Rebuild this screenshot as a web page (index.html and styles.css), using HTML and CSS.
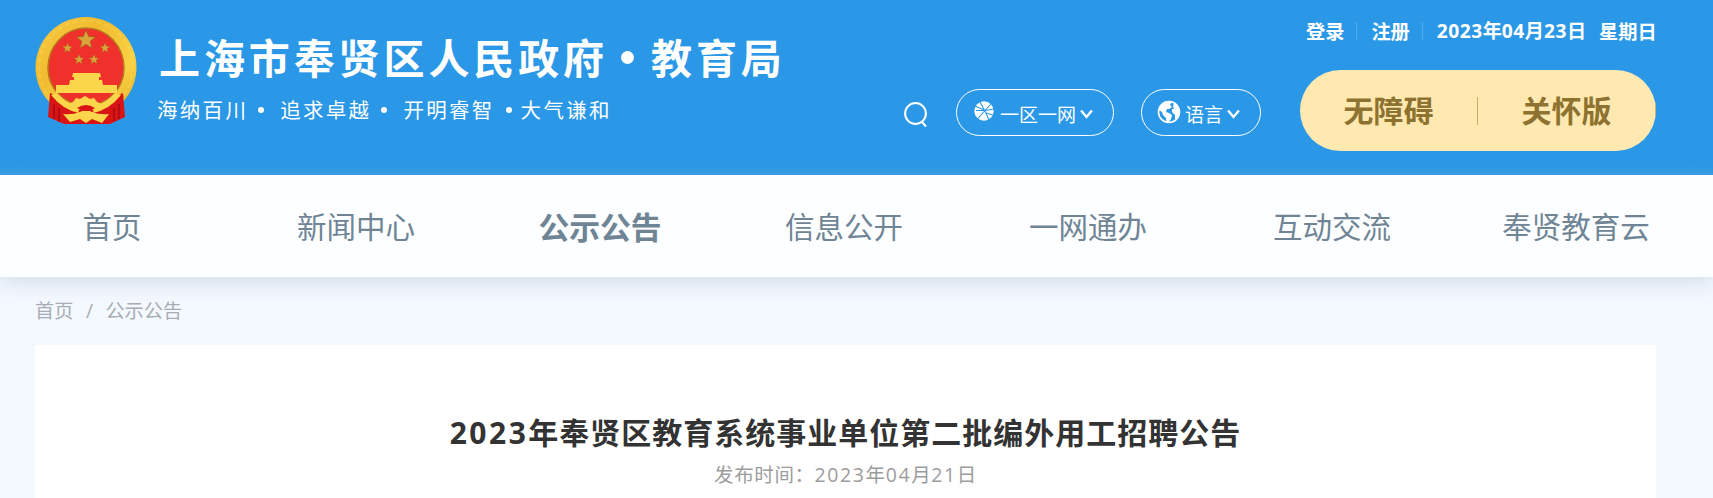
FILE: index.html
```html
<!DOCTYPE html>
<html lang="zh-CN">
<head>
    <meta charset="UTF-8">
    <title>2023年奉贤区教育系统事业单位第二批编外用工招聘公告</title>
    <link rel="stylesheet" href="styles.css">
</head>
<body>

<div class="header">
    <div class="container">
        <div class="brand">
            <svg class="emblem" viewBox="0 0 102 109">
                <defs>
                    <linearGradient id="gold" x1="0" y1="0" x2="1" y2="1">
                        <stop offset="0" stop-color="#f7cb43"/>
                        <stop offset=".35" stop-color="#f1bb30"/>
                        <stop offset=".7" stop-color="#fad244"/>
                        <stop offset="1" stop-color="#e3a325"/>
                    </linearGradient>
                    <path id="star" d="M0-10 2.600-3.400 9.500-3.100 4.100 1.300 5.900 8.100 0 4.200-5.900 8.100-4.100 1.300-9.500-3.100-2.600-3.400z"/>
                </defs>
                <circle cx="51" cy="51.500" r="50.500" fill="url(#gold)"/>
                <circle cx="51" cy="51.500" r="47" fill="none" stroke="#ffe070" stroke-width="2" stroke-dasharray="5 3" opacity=".3"/>
                <path d="M15 77 30 84 51 92 73 84 88 77 90 101 75 108H29L13 101z" fill="#d91414"/>
                <path d="M13 52a38 40 0 0 1 76 0 38 38 0 0 1-76 0z" fill="#f0302a" stroke="#b5781c" stroke-width="1.500"/>
                <g fill="#d9a53a" stroke="#8d5d18" stroke-width=".5">
                    <use href="#star" transform="translate(51 24)"/>
                    <use href="#star" transform="translate(32.500 32) scale(.52)"/>
                    <use href="#star" transform="translate(70 32) scale(.52)"/>
                    <use href="#star" transform="translate(44 43.500) scale(.52)"/>
                    <use href="#star" transform="translate(59 43.500) scale(.52)"/>
                </g>
                <g fill="#fbd64a">
                    <path d="M38 57h27l1 4h-29zM39 61h25v5h-25zM35 64h32l1 5h-34zM21 69h61v8h-61z"/>
                    <path d="M16 79q12 15 28 18l-1-7q-12-3-21-13z"/>
                    <path d="M86 79q-12 15-28 18l1-7q12-3 21-13z"/>
                    <path d="M33 88l5-2 3-4 4 1 5-3 5 3 4-1 3 4 5 2-8 6h-18z"/>
                    <path d="M28 98q9 1 17-2l6-3 6 3q8 3 17 2l-7 9-10-4-6 4-6-4-10 3z"/>
                </g>
                <path d="M42 92q9-6 18 0l-5 3h-8z" fill="#d91414"/>
                <path d="M19 88v15M24 92v14M79 92v13M84 88v15" stroke="#a50d10" stroke-width="1.500"/>
            </svg>
            <div class="brand-text">
                <div class="brand-name">上海市奉贤区人民政府<i class="dot"></i>教育局</div>
                <div class="slogan">
                    <span>海纳百川</span><i></i><span>追求卓越</span><i></i><span>开明睿智</span><i class="tight"></i><span>大气谦和</span>
                </div>
            </div>
        </div>

        <div class="tools">
            <svg class="search" viewBox="0 0 24 26">
                <circle cx="11.500" cy="11.500" r="10.400"/>
                <path d="M18 20l4 4.500"/>
            </svg>
            <a class="pill pill-net">
                <svg class="ico-net" viewBox="0 0 20 20">
                    <circle cx="10" cy="10" r="9.700" fill="#fff"/>
                    <path d="M1 5 11 9.500 20 8M2 9.500 11 9.500M6 1 12 12 15 19M17 3 11 9.500 4 17.500M12 12 19 14" fill="none" stroke="#2a98e6" stroke-width="1.100"/>
                </svg>
                <span>一区一网</span>
                <svg class="down" viewBox="0 0 12 9"><path d="M1 1.200 6 7.200 11 1.200"/></svg>
            </a>
            <a class="pill pill-lang">
                <svg class="ico-globe" viewBox="0 0 24 24">
                    <circle cx="12" cy="12" r="10.500" fill="none" stroke="#fff" stroke-width="1.600"/>
                    <path d="M3 6 8 1.500 15 2 13 5 15 7 12 9 10 9 9 12 12 13 15 15 14 19 12 22 9 22 9 18 6 15 5 12 2 10z" fill="#fff"/>
                    <path d="M17 3 22 8 23 13 21 18 18 19 18 15 15 12 15 9 17 9 16 6z" fill="#fff"/>
                </svg>
                <span>语言</span>
                <svg class="down" viewBox="0 0 12 9"><path d="M1 1.200 6 7.200 11 1.200"/></svg>
            </a>
        </div>

        <div class="side">
            <div class="user">
                <a>登录</a>
                <a>注册</a>
                <span class="date"><b>2023</b>年<b>04</b>月<b>23</b>日</span>
                <span class="week">星期日</span>
            </div>
            <div class="care">
                <a>无障碍</a>
                <a>关怀版</a>
            </div>
        </div>
    </div>
</div>

<div class="nav">
    <ul>
        <li>首页</li>
        <li>新闻中心</li>
        <li class="active">公示公告</li>
        <li>信息公开</li>
        <li>一网通办</li>
        <li>互动交流</li>
        <li>奉贤教育云</li>
    </ul>
</div>

<div class="main">
    <div class="crumb"><a>首页</a><span>/</span><a>公示公告</a></div>
    <div class="article">
        <h1><b>2023</b>年奉贤区教育系统事业单位第二批编外用工招聘公告</h1>
        <p class="time">发布时间：<b>2023</b>年<b>04</b>月<b>21</b>日</p>
    </div>
</div>

</body>
</html>
```
FILE: styles.css
```css
*{box-sizing:border-box}
body{
    margin:0;
    height:498px;
    overflow:hidden;
    background:#f4f8ff;
    font-family:"Noto Sans CJK SC",sans-serif;
}
b{
    font-family:"Open Sans","Noto Sans CJK SC",sans-serif;
    font-weight:inherit;
}
.header{
    height:175px;
    background:linear-gradient(#2a98e6 165px,#359ce5 175px);
    color:#fff;
}
.container{
    width:1621px;
    margin-left:35px;
    display:flex;
}
/* logo */
.brand{
    display:flex;
    width:869px;
    padding-top:16px;
}
.emblem{
    width:102px;
    height:109px;
}
.brand-text{
    padding:10px 0 0 22px;
    white-space:nowrap;
}
.brand-name{
    display:flex;
    align-items:center;
    height:60px;
    font-size:41px;
    font-weight:700;
    letter-spacing:3.9px;
}
.dot{
    width:13px;
    height:13px;
    margin:2px 17px 0 13px;
    border-radius:50%;
    background:#fff;
}
.slogan{
    display:flex;
    align-items:center;
    height:30px;
    margin-top:8px;
    margin-left:-2px;
    font-size:20.5px;
    letter-spacing:2.3px;
}
.slogan i{
    width:6px;
    height:6px;
    margin:1px 16px 0 10px;
    border-radius:50%;
    background:#fff;
}
.slogan .tight{margin:1px 9px 0 11px}
/* search + dropdowns */
.tools{
    display:flex;
    width:396px;
    padding-top:89px;
}
.search{
    width:24px;
    height:26px;
    margin:13px 28px 0 0;
    fill:none;
    stroke:#fff;
    stroke-width:2;
}
.pill{
    display:flex;
    align-items:center;
    height:47px;
    border:1px solid #fff;
    border-radius:24px;
    font-size:19px;
    white-space:nowrap;
}
.pill-net{
    width:158px;
    margin-right:27px;
    padding-left:17px;
}
.pill-lang{
    width:120px;
    padding-left:15px;
}
.pill span{
    margin:1px 4px 0 6px;
}
.pill-lang span{margin-left:4px}
.ico-net{
    width:20px;
    height:20px;
    margin-bottom:3px;
}
.ico-globe{
    width:24px;
    height:24px;
    margin-bottom:2px;
}
.down{
    width:13px;
    height:10px;
    margin-top:2px;
    fill:none;
    stroke:#fff;
    stroke-width:2.2;
}
/* right column */
.side{width:356px}
.user{
    display:flex;
    align-items:center;
    height:70px;
    padding:0 0 9px 6px;
    font-size:19.2px;
    font-weight:700;
    line-height:18px;
    white-space:nowrap;
}
.user a{
    padding-right:12px;
    margin-right:14px;
    border-right:1px solid #4fadec;
}
.user b{letter-spacing:.5px}
.week{margin-left:13px}
.care{
    display:flex;
    align-items:center;
    height:81px;
    overflow:hidden;
    border-radius:41px;
    background:#ffe9b1;
    color:#8e7230;
}
.care a{
    width:178px;
    height:28px;
    border-right:1px solid #c5ac6b;
    font-size:30px;
    font-weight:700;
    line-height:25px;
    text-align:center;
}
/* nav */
.nav{
    position:relative;
    height:102px;
    background:#fdfeff;
    box-shadow:0 4px 20px rgba(120,155,175,.3);
}
.nav ul{
    display:grid;
    grid-template-columns:repeat(7,244px);
    margin:0 0 0 -10px;
    padding:0;
    list-style:none;
}
.nav li{
    height:102px;
    color:#6f8596;
    font-size:29.5px;
    line-height:101px;
    text-align:center;
}
.nav .active{
    font-size:30.8px;
    font-weight:700;
}
/* content */
.main{
    width:1621px;
    margin-left:35px;
}
.crumb{
    height:68px;
    color:#a9adb3;
    font-size:19.2px;
    line-height:67px;
}
.crumb span{
    margin:0 12.5px;
    font-family:"Open Sans",sans-serif;
}
.article{
    height:153px;
    padding-top:64px;
    background:#fff;
    text-align:center;
}
h1{
    margin:0;
    color:#333;
    font-size:30px;
    letter-spacing:1px;
    line-height:44px;
}
h1 b{letter-spacing:2.5px}
.time{
    margin:3px 0 0;
    color:#9c9c9c;
    font-size:19.5px;
    letter-spacing:.6px;
    line-height:32px;
}
.time b{letter-spacing:1.6px}
```
